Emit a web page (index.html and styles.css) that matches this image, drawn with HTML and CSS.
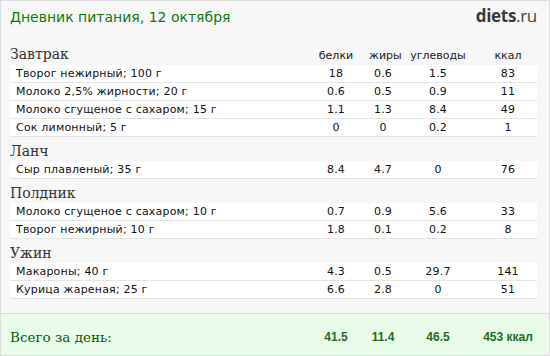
FILE: index.html
```html
<!DOCTYPE html>
<html lang="ru">
<head>
<meta charset="utf-8">
<title>Дневник питания</title>
<link rel="stylesheet" href="styles.css">
</head>
<body>
<div class="page">
  <div class="header">
    <div class="title">Дневник питания, 12 октября</div>
    <div class="logo"><b>diets</b>.ru</div>
  </div>
  <div class="main">
    <div class="meal-head first">
      <div class="meal-name">Завтрак</div>
      <div class="col">белки</div>
      <div class="col">жиры</div>
      <div class="col">углеводы</div>
      <div class="col">ккал</div>
    </div>
    <div class="row"><div class="name">Творог нежирный; 100 г</div><div class="col">18</div><div class="col">0.6</div><div class="col">1.5</div><div class="col">83</div></div>
    <div class="row"><div class="name">Молоко 2,5% жирности; 20 г</div><div class="col">0.6</div><div class="col">0.5</div><div class="col">0.9</div><div class="col">11</div></div>
    <div class="row"><div class="name">Молоко сгущеное с сахаром; 15 г</div><div class="col">1.1</div><div class="col">1.3</div><div class="col">8.4</div><div class="col">49</div></div>
    <div class="row"><div class="name">Сок лимонный; 5 г</div><div class="col">0</div><div class="col">0</div><div class="col">0.2</div><div class="col">1</div></div>

    <div class="meal-head"><div class="meal-name">Ланч</div></div>
    <div class="row"><div class="name">Сыр плавленый; 35 г</div><div class="col">8.4</div><div class="col">4.7</div><div class="col">0</div><div class="col">76</div></div>

    <div class="meal-head"><div class="meal-name">Полдник</div></div>
    <div class="row"><div class="name">Молоко сгущеное с сахаром; 10 г</div><div class="col">0.7</div><div class="col">0.9</div><div class="col">5.6</div><div class="col">33</div></div>
    <div class="row"><div class="name">Творог нежирный; 10 г</div><div class="col">1.8</div><div class="col">0.1</div><div class="col">0.2</div><div class="col">8</div></div>

    <div class="meal-head"><div class="meal-name">Ужин</div></div>
    <div class="row"><div class="name">Макароны; 40 г</div><div class="col">4.3</div><div class="col">0.5</div><div class="col">29.7</div><div class="col">141</div></div>
    <div class="row"><div class="name">Курица жареная; 25 г</div><div class="col">6.6</div><div class="col">2.8</div><div class="col">0</div><div class="col">51</div></div>
  </div>
  <div class="total">
    <div class="total-label">Всего за день:</div>
    <div class="col">41.5</div>
    <div class="col">11.4</div>
    <div class="col">46.5</div>
    <div class="col">453 ккал</div>
  </div>
</div>
</body>
</html>
```
FILE: styles.css
```css
* { box-sizing: border-box; }
html, body { margin: 0; padding: 0; background: #fff; }
.page {
  width: 550px;
  height: 356px;
  border: 1px solid #dcdcdc;
  background: #f7f7f7;
  display: flex;
  flex-direction: column;
  font-family: "DejaVu Sans", Verdana, sans-serif;
}
.header {
  display: flex;
  justify-content: space-between;
  align-items: flex-start;
  padding: 6px 12px 0 9px;
  height: 40px;
}
.title {
  color: #0c7a0c;
  font-size: 14px;
  line-height: 20px;
}
.logo {
  font-family: "Open Sans", sans-serif;
  font-size: 17px;
  line-height: 20px;
  color: #444;
  letter-spacing: -0.3px;
  margin-top: -1px;
}
.logo b { color: #3a3a3a; font-weight: 700; }
.main {
  padding: 0 12px 0 9px;
}
.meal-head, .row, .total {
  display: grid;
  grid-template-columns: 1fr 66px 28px 82px 58px;
  align-items: center;
}
.meal-head {
  height: 24px;
  padding-top: 4px;
}
.meal-head.first { height: 24px; padding-top: 2px; }
.meal-name {
  font-family: "DejaVu Serif", Georgia, serif;
  font-size: 14px;
  color: #333;
  line-height: 18px;
}
.meal-head .col {
  font-size: 11px;
  color: #222;
  text-align: center;
  white-space: nowrap;
  padding-top: 3px;
}
.row {
  background: #fff;
  height: 18px;
  border-bottom: 1px solid #e4e4e4;
  font-size: 11px;
  color: #111;
  letter-spacing: 0.2px;
}
.row .name { padding-left: 6px; white-space: nowrap; }
.row .col { text-align: center; }
.total {
  margin-top: auto;
  height: 42px;
  background: #e9fce9;
  border-top: 1px solid #dcdcdc;
  padding: 5px 12px 0 9px;
}
.total-label {
  font-family: "DejaVu Serif", Georgia, serif;
  font-size: 13.5px;
  color: #0a5a0a;
}
.total .col {
  font-family: "Liberation Sans", Arial, sans-serif;
  font-weight: bold;
  font-size: 12px;
  color: #1e6e1e;
  text-align: center;
  white-space: nowrap;
}
```
